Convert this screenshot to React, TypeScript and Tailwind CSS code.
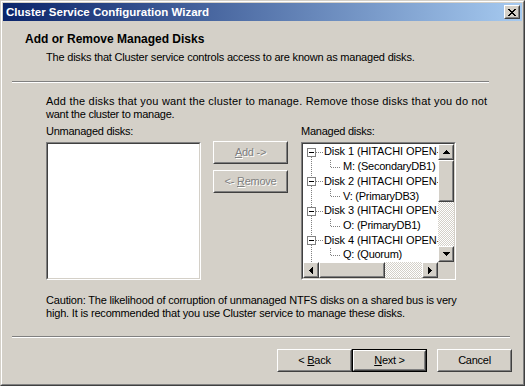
import type { ReactNode } from "react";

const FONT = "font-['Liberation_Sans',Arial,sans-serif]";

function Raised({ className = "", inner = "", children }: { className?: string; inner?: string; children?: ReactNode }) {
  return (
    <div className={`border border-t-white border-l-white border-r-[#404040] border-b-[#404040] ${className}`}>
      <div className={`h-full w-full border border-t-[#d4d0c8] border-l-[#d4d0c8] border-r-[#808080] border-b-[#808080] ${inner}`}>
        {children}
      </div>
    </div>
  );
}

function Sunken({ className = "", inner = "", children }: { className?: string; inner?: string; children?: ReactNode }) {
  return (
    <div className={`border border-t-[#808080] border-l-[#808080] border-r-white border-b-white ${className}`}>
      <div className={`h-full w-full border border-t-[#404040] border-l-[#404040] border-r-[#d4d0c8] border-b-[#d4d0c8] ${inner}`}>
        {children}
      </div>
    </div>
  );
}

function Button({ children, disabled, isDefault }: { children: ReactNode; disabled?: boolean; isDefault?: boolean }) {
  const text = disabled ? "text-[#808080] [text-shadow:1px_1px_0_#ffffff]" : "text-black";
  const face = (
    <Raised className="h-full w-full" inner={`flex items-center justify-center ${text}`}>
      <span>{children}</span>
    </Raised>
  );
  if (isDefault) return <div className="h-[23px] w-[75px] border border-black">{face}</div>;
  return <div className="h-[23px] w-[75px]">{face}</div>;
}

function Tri({ dir }: { dir: "up" | "down" | "left" | "right" }) {
  const rows = [
    [3, 1],
    [2, 3],
    [1, 5],
    [0, 7],
  ];
  if (dir === "up" || dir === "down") {
    const r = dir === "up" ? rows : [...rows].reverse();
    return (
      <svg width="7" height="4" shapeRendering="crispEdges">
        {r.map(([x, w], i) => (
          <rect key={i} x={x} y={i} width={w} height={1} fill="#000" />
        ))}
      </svg>
    );
  }
  const r = dir === "left" ? rows : [...rows].reverse();
  return (
    <svg width="4" height="7" shapeRendering="crispEdges">
      {r.map(([y, h], i) => (
        <rect key={i} x={i} y={y} width={1} height={h} fill="#000" />
      ))}
    </svg>
  );
}

function ArrowBtn({ dir }: { dir: "up" | "down" | "left" | "right" }) {
  return (
    <Raised className="h-4 w-4 shrink-0 bg-[#d4d0c8]" inner="flex items-center justify-center">
      <Tri dir={dir} />
    </Raised>
  );
}

const TRACK =
  "bg-[image:repeating-conic-gradient(#d4d0c8_0_25%,#ffffff_0_50%)] bg-[length:2px_2px]";

const ROW = 14.7;
const TOP = 0.65;
const rows = [
  { text: "Disk 1 (HITACHI OPEN-V SCSI Disk Device)", child: false },
  { text: "M: (SecondaryDB1)", child: true },
  { text: "Disk 2 (HITACHI OPEN-V SCSI Disk Device)", child: false },
  { text: "V: (PrimaryDB3)", child: true },
  { text: "Disk 3 (HITACHI OPEN-V SCSI Disk Device)", child: false },
  { text: "O: (PrimaryDB1)", child: true },
  { text: "Disk 4 (HITACHI OPEN-V SCSI Disk Device)", child: false },
  { text: "Q: (Quorum)", child: true },
];

function TreeLines() {
  const c = (k: number) => Math.round(TOP + ROW / 2 + k * ROW);
  const disks = [0, 2, 4, 6];
  return (
    <svg className="absolute inset-0" width="135" height="118" shapeRendering="crispEdges">
      {disks.map((k, i) => {
        const y = c(k);
        const next = i < disks.length - 1 ? c(disks[i + 1]) - 4 : 130;
        const cy = c(k + 1);
        return (
          <g key={k}>
            <line x1={8.5} y1={y + 5} x2={8.5} y2={next} stroke="#808080" strokeDasharray="1 1" />
            <line x1={13} y1={y + 0.5} x2={21} y2={y + 0.5} stroke="#808080" strokeDasharray="1 1" />
            <line x1={27.5} y1={y + 8} x2={27.5} y2={cy} stroke="#808080" strokeDasharray="1 1" />
            <line x1={28} y1={cy + 0.5} x2={38} y2={cy + 0.5} stroke="#808080" strokeDasharray="1 1" />
            <rect x={4.5} y={y - 3.5} width={8} height={8} fill="#fff" stroke="#808080" />
            <line x1={6} y1={y + 0.5} x2={11} y2={y + 0.5} stroke="#000" />
          </g>
        );
      })}
    </svg>
  );
}

export default function App() {
  return (
    <div className={`${FONT} h-[386px] w-[525px] border border-t-[#d4d0c8] border-l-[#d4d0c8] border-r-[#404040] border-b-[#404040] bg-[#d4d0c8] text-[11px] leading-[13px] tracking-[-0.25px] text-black`}>
      <div className="flex h-full w-full flex-col border border-t-white border-l-white border-r-[#808080] border-b-[#808080] p-px">
        {/* caption */}
        <div className="flex h-[18px] shrink-0 items-center justify-between bg-[linear-gradient(to_right,#0a246a,#a6caf0)] pl-[3px] pr-[2px]">
          <span className="text-[11.5px] font-bold tracking-normal text-white">Cluster Service Configuration Wizard</span>
          <Raised className="h-[14px] w-4 bg-[#d4d0c8]" inner="flex items-center justify-center">
            <svg width="8" height="7" shapeRendering="crispEdges">
              <path d="M0 0h2v1h-2zM6 0h2v1h-2zM1 1h2v1h-2zM5 1h2v1h-2zM2 2h4v1h-4zM3 3h2v1h-2zM2 4h4v1h-4zM1 5h2v1h-2zM5 5h2v1h-2zM0 6h2v1h-2zM6 6h2v1h-2z" fill="#000" />
            </svg>
          </Raised>
        </div>

        {/* header */}
        <div className="pl-[22px] pt-[12px] text-[12px] font-bold tracking-normal">Add or Remove Managed Disks</div>
        <div className="mt-[5px] pl-[43px] tracking-[-0.2px]">The disks that Cluster service controls access to are known as managed disks.</div>
        <div className="ml-[9px] mt-[17px] w-[477px] border-t border-b border-t-[#808080] border-b-white" />

        {/* body */}
        <div className="pl-[43px]">
          <div className="mt-[12px]">
            <span className="tracking-[0.2px]">Add the disks that you want the cluster to manage. Remove those disks that you do not</span>
            <br />
            want the cluster to manage.
          </div>

          <div className="mt-[4px] flex">
            <div className="flex flex-col">
              <div>Unmanaged disks:</div>
              <Sunken className="mt-[4px] h-[138px] w-[155px]" inner="bg-white" />
            </div>

            <div className="ml-[12px] mt-[16px] flex flex-col gap-[6px]">
              <Button disabled>
                <span className="underline">A</span>dd -&gt;
              </Button>
              <Button disabled>
                &lt;- <span className="underline">R</span>emove
              </Button>
            </div>

            <div className="ml-[13px] flex flex-col">
              <div>Managed disks:</div>
              <Sunken className="mt-[4px] h-[138px] w-[155px]" inner="grid grid-cols-[1fr_16px] grid-rows-[1fr_16px] bg-white">
                <div className="relative overflow-hidden pt-[0.65px]">
                  <TreeLines />
                  {rows.map((r, i) => (
                    <div
                      key={i}
                      className={`relative flex h-[14.7px] items-center whitespace-nowrap ${r.child ? "pl-[40px]" : "pl-[21px] tracking-[-0.1px]"}`}
                    >
                      {r.text}
                    </div>
                  ))}
                </div>
                <div className="flex flex-col">
                  <ArrowBtn dir="up" />
                  <Raised className="h-[42px] w-4 bg-[#d4d0c8]" />
                  <div className={`flex-1 ${TRACK}`} />
                  <ArrowBtn dir="down" />
                </div>
                <div className="flex">
                  <ArrowBtn dir="left" />
                  <Raised className="h-4 w-[66px] bg-[#d4d0c8]" />
                  <div className={`flex-1 ${TRACK}`} />
                  <ArrowBtn dir="right" />
                </div>
                <div className="bg-[#d4d0c8]" />
              </Sunken>
            </div>
          </div>

          <div className="mt-[14px] tracking-[-0.18px]">
            Caution: The likelihood of corruption of unmanaged NTFS disks on a shared bus is very
            <br />
            high. It is recommended that you use Cluster service to manage these disks.
          </div>
        </div>

        <div className="ml-[9px] mt-[16px] w-[498px] border-t border-b border-t-[#808080] border-b-white" />

        {/* footer buttons */}
        <div className="mt-[11px] flex justify-end pr-[10px]">
          <Button>
            &lt; <span className="underline">B</span>ack
          </Button>
          <Button isDefault>
            <span className="underline">N</span>ext &gt;
          </Button>
          <div className="ml-[10px]">
            <Button>Cancel</Button>
          </div>
        </div>
      </div>
    </div>
  );
}
